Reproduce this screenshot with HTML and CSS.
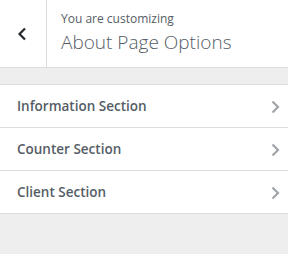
FILE: index.html
```html
<!DOCTYPE html>
<html lang="en">
<head>
  <meta charset="UTF-8" />
  <title>Customizer</title>
  <link rel="stylesheet" href="styles.css">
</head>
<body>
  <div class="panel-header">
    <button class="back-btn" aria-label="Back">
      <svg width="10" height="14" viewBox="0 0 10 14"><path d="M8 1.5 2.5 7 8 12.5" fill="none" stroke="#23282d" stroke-width="2.2"/></svg>
    </button>
    <div class="panel-info">
      <span class="action">You are customizing</span>
      <h3 class="panel-title">About Page Options</h3>
    </div>
  </div>

  <ul class="sections">
    <li class="section-title">
      Information Section
      <svg class="chevron" width="9" height="14" viewBox="0 0 9 14"><path d="M1.5 1.5 7 7 1.5 12.5" fill="none" stroke="#a0a5aa" stroke-width="2.2"/></svg>
    </li>
    <li class="section-title">
      Counter Section
      <svg class="chevron" width="9" height="14" viewBox="0 0 9 14"><path d="M1.5 1.5 7 7 1.5 12.5" fill="none" stroke="#a0a5aa" stroke-width="2.2"/></svg>
    </li>
    <li class="section-title">
      Client Section
      <svg class="chevron" width="9" height="14" viewBox="0 0 9 14"><path d="M1.5 1.5 7 7 1.5 12.5" fill="none" stroke="#a0a5aa" stroke-width="2.2"/></svg>
    </li>
  </ul>
</body>
</html>
```

FILE: styles.css
```css
* {
  margin: 0;
  padding: 0;
  box-sizing: border-box;
}
body {
  font-family: 'Open Sans', 'Noto Sans', sans-serif;
  background: #eee;
  min-height: 100vh;
}
.panel-header {
  display: flex;
  height: 68px;
  background: #fff;
  border-bottom: 1px solid #ddd;
}
.back-btn {
  width: 47px;
  border: none;
  border-right: 1px solid #ddd;
  background: #fff;
  display: flex;
  align-items: center;
  justify-content: center;
  padding: 1px 2px 0 0;
  cursor: pointer;
}
.panel-info {
  padding: 10px 0 0 14px;
}
.action {
  display: block;
  font-size: 12px;
  line-height: 18px;
  color: #555d66;
}
.panel-title {
  font-size: 19px;
  font-weight: 300;
  line-height: 28px;
  color: #555d66;
}
.sections {
  list-style: none;
  margin-top: 16px;
  background: #fff;
  border-bottom: 1px solid #ddd;
}
.section-title {
  display: flex;
  align-items: center;
  justify-content: space-between;
  border-top: 1px solid #ddd;
  padding: 11px 8px 10px 17px;
  font-size: 13.5px;
  font-weight: 600;
  line-height: 21px;
  color: #555d66;
  cursor: pointer;
}
```
